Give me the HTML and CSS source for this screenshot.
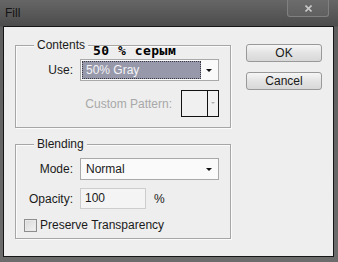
FILE: index.html
```html
<!DOCTYPE html>
<html>
<head>
<meta charset="utf-8">
<link rel="stylesheet" href="styles.css">
</head>
<body>
<div class="window">
  <div class="titlebar">
    <span class="title">Fill</span>
    <div class="close">
      <svg width="7" height="7" viewBox="0 0 7 7"><path d="M0.5 0.5 L6.5 6.5 M6.5 0.5 L0.5 6.5" stroke="#c8c8c8" stroke-width="1.6"/></svg>
    </div>
  </div>
  <div class="content">
    <div class="groups">
      <div class="group group-contents">
        <span class="legend">Contents</span>
        <span class="note">50 % серым</span>
        <div class="row">
          <span class="label">Use:</span>
          <div class="select">
            <span class="selected">50% Gray</span>
            <span class="arrow"></span>
          </div>
        </div>
        <div class="row row-pattern">
          <span class="label-disabled">Custom Pattern:</span>
          <div class="pattern">
            <span class="pattern-swatch"></span>
            <span class="pattern-btn"><span class="arrow arrow-gray"></span></span>
          </div>
        </div>
      </div>
      <div class="group group-blending">
        <span class="legend">Blending</span>
        <div class="row">
          <span class="label">Mode:</span>
          <div class="select">
            <span class="value">Normal</span>
            <span class="arrow"></span>
          </div>
        </div>
        <div class="row row-opacity">
          <span class="label">Opacity:</span>
          <div class="input">100</div>
          <span class="unit">%</span>
        </div>
        <div class="row row-check">
          <span class="checkbox"></span>
          <span class="check-label">Preserve Transparency</span>
        </div>
      </div>
    </div>
    <div class="buttons">
      <div class="button">OK</div>
      <div class="button">Cancel</div>
    </div>
  </div>
</div>
</body>
</html>
```

FILE: styles.css
```css
html, body {
  margin: 0;
  padding: 0;
  background: #5a5a5a;
}
body {
  width: 338px;
  height: 262px;
  overflow: hidden;
  font-family: "Liberation Sans", Arial, sans-serif;
  font-size: 12px;
  color: #1a1a1a;
}
.window {
  width: 338px;
  height: 262px;
  display: flex;
  flex-direction: column;
  background: linear-gradient(#666666 0, #4c4c4c 26px, #5e5e5e 27px, #6c6c6c 262px);
}
.titlebar {
  height: 26px;
  position: relative;
  display: flex;
  align-items: flex-start;
}
.title {
  margin: 6px 0 0 5px;
  line-height: 14px;
  font-size: 12px;
  color: #141414;
}
.close {
  position: absolute;
  top: 0;
  right: 9px;
  width: 42px;
  height: 17px;
  box-sizing: border-box;
  border: 1px solid #808080;
  border-top: none;
  border-radius: 0 0 3px 3px;
  background: linear-gradient(#6c6c6c, #606060);
  display: flex;
  align-items: center;
  justify-content: center;
}
.content {
  margin: 0 4px 5px 3px;
  height: 231px;
  box-sizing: border-box;
  border: 1px solid #161616;
  background: #eeeeee;
  display: flex;
  padding: 18px 0 0 11px;
}
.groups {
  width: 216px;
  display: flex;
  flex-direction: column;
}
.group {
  position: relative;
  box-sizing: border-box;
  border: 1px solid #a6a6a6;
  box-shadow: inset 1px 1px 0 #fbfbfb, 1px 1px 0 #fbfbfb;
  padding-top: 13px;
}
.group-contents {
  height: 83px;
}
.group-blending {
  height: 95px;
  margin-top: 16px;
}
.legend {
  position: absolute;
  top: -8px;
  left: 18px;
  padding: 0 3px;
  line-height: 15px;
  background: #eeeeee;
  color: #1a1a1a;
}
.note {
  position: absolute;
  top: -2px;
  left: 77px;
  font-family: "DejaVu Sans Mono", monospace;
  font-weight: bold;
  font-size: 13px;
  letter-spacing: 0.5px;
  line-height: 13px;
  color: #000000;
}
.row {
  display: flex;
  align-items: center;
}
.label {
  width: 57px;
  margin-right: 7px;
  text-align: right;
}
.select {
  width: 139px;
  height: 22px;
  box-sizing: border-box;
  border: 1px solid #a9a9a9;
  background: #fafafa;
  display: flex;
  align-items: center;
  position: relative;
}
.selected {
  margin-left: 1px;
  width: 119px;
  height: 18px;
  box-sizing: border-box;
  border: 1px dotted #3a3a46;
  background: #9799aa;
  color: #f4f4f8;
  padding-left: 3px;
  line-height: 16px;
}
.value {
  padding-left: 5px;
}
.arrow {
  position: absolute;
  right: 6px;
  top: 9px;
  width: 0;
  height: 0;
  border-left: 3px solid transparent;
  border-right: 3px solid transparent;
  border-top: 3px solid #111;
}
.row-pattern {
  width: 203px;
  justify-content: flex-end;
  margin-top: 9px;
}
.label-disabled {
  color: #a8a8a8;
  margin-right: 9px;
}
.pattern {
  width: 38px;
  height: 27px;
  box-sizing: border-box;
  border: 1px solid #111;
  display: flex;
  background: #f0f0f0;
}
.pattern-swatch {
  width: 25px;
  border-right: 1px solid #111;
}
.pattern-btn {
  flex: 1;
  position: relative;
}
.arrow-gray {
  right: 3px;
  top: 11px;
  border-left-width: 2px;
  border-right-width: 2px;
  border-top: 2px solid #b0b0b0;
}
.row-opacity {
  margin-top: 8px;
}
.input {
  width: 66px;
  height: 21px;
  box-sizing: border-box;
  border: 1px solid #cdcdcd;
  background: #f4f4f4;
  padding-left: 4px;
  line-height: 19px;
}
.unit {
  margin-left: 8px;
}
.row-check {
  margin-top: 9px;
  padding-left: 8px;
}
.checkbox {
  width: 13px;
  height: 13px;
  box-sizing: border-box;
  border: 1px solid #8e8e8e;
  background: linear-gradient(135deg, #d8d8d8, #f4f4f4);
  box-shadow: inset 0 0 0 1px #e8e8e8;
}
.check-label {
  margin-left: 3px;
}
.buttons {
  margin-left: 15px;
  margin-top: -1px;
  display: flex;
  flex-direction: column;
  gap: 10px;
}
.button {
  width: 76px;
  height: 18px;
  box-sizing: border-box;
  border: 1px solid #999999;
  border-radius: 3px;
  background: linear-gradient(#f6f6f6, #e2e2e2 55%, #d8d8d8);
  text-align: center;
  line-height: 16px;
  font-size: 12px;
  color: #1a1a1a;
}
```
